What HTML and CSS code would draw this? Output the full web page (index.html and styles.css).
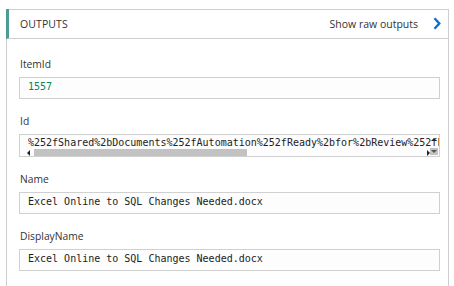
FILE: index.html
```html
<!DOCTYPE html>
<html>
<head>
<meta charset="utf-8">
<link rel="stylesheet" href="styles.css">
</head>
<body>
<div class="panel">
  <div class="header">
    <span class="title">OUTPUTS</span>
    <span class="raw">Show raw outputs
      <svg class="chev" width="8" height="13" viewBox="0 0 8 13"><path d="M1.5 1.2 L6.3 6.5 L1.5 11.8" fill="none" stroke="#0b6fd6" stroke-width="2.4"/></svg>
    </span>
  </div>
  <div class="body">
    <div class="field">
      <div class="label">ItemId</div>
      <div class="box"><span class="num">1557</span></div>
    </div>
    <div class="field">
      <div class="label">Id</div>
      <div class="box scroll">
        <div class="line">%252fShared%2bDocuments%252fAutomation%252fReady%2bfor%2bReview%252fExcel</div>
        <div class="hbar">
          <span class="arr left"></span>
          <span class="thumb"></span>
          <span class="arr right"></span>
        </div>
        <div class="vbar">
          <span class="up"></span>
          <span class="down"><span class="dtri"></span></span>
        </div>
      </div>
    </div>
    <div class="field">
      <div class="label">Name</div>
      <div class="box">Excel Online to SQL Changes Needed.docx</div>
    </div>
    <div class="field">
      <div class="label">DisplayName</div>
      <div class="box">Excel Online to SQL Changes Needed.docx</div>
    </div>
  </div>
</div>
</body>
</html>
```
FILE: styles.css
```css
html, body {
  margin: 0;
  padding: 0;
  background: #fff;
  overflow: hidden;
  height: 286px;
}
body {
  font-family: "Open Sans", "Noto Sans", sans-serif;
  color: #333;
}
.panel {
  margin: 9px 0 0 6px;
  width: 443px;
  height: 277px;
  border: 1px solid #cfcfcf;
  border-bottom: none;
  box-sizing: border-box;
}
.header {
  box-sizing: border-box;
  border-bottom: 1px solid #cfcfcf;
  border-left: 3px solid #4e9b96;
  margin-left: -1px;
  margin-top: -1px;
  height: 30px;
  display: flex;
  align-items: center;
  justify-content: space-between;
  padding: 0 7px 0 11px;
  font-size: 10.5px;
}
.title {
  letter-spacing: 0.1px;
  color: #333;
}
.raw {
  display: flex;
  align-items: center;
  gap: 15px;
  color: #333;
}
.chev { display: block; }
.body {
  padding: 18px 10px 0 12px;
  display: flex;
  flex-direction: column;
  gap: 15px;
}
.field {
  display: flex;
  flex-direction: column;
  gap: 6px;
}
.label {
  height: 14px;
  line-height: 14px;
  font-size: 10.3px;
  padding-left: 1px;
  color: #333;
}
.box {
  height: 22px;
  box-sizing: border-box;
  width: 421px;
  border: 1px solid #d0d0d0;
  background: #fdfdfd;
  font-family: "DejaVu Sans Mono", "Liberation Mono", monospace;
  font-size: 10px;
  line-height: 12px;
  padding: 3px 0 0 8px;
  color: #222;
  white-space: nowrap;
  overflow: hidden;
}
.num { color: #098658; }
.scroll {
  position: relative;
  padding: 2px 0 0 8px;
  height: 23px;
}
.line {
  height: 11px;
  line-height: 11px;
  overflow: hidden;
}
.hbar {
  display: flex;
  align-items: center;
  height: 7px;
  margin-top: 1px;
  margin-left: -1px;
  width: 403px;
}
.arr {
  width: 0;
  height: 0;
  border-top: 3px solid transparent;
  border-bottom: 3px solid transparent;
}
.arr.left {
  border-right: 3px solid #222;
  margin-right: 4px;
}
.arr.right {
  border-left: 3px solid #222;
  margin-left: auto;
}
.thumb {
  width: 213px;
  height: 7px;
  background: #c2c2c2;
}
.vbar {
  position: absolute;
  right: 1px;
  top: 1px;
  bottom: 1px;
  width: 8px;
  display: flex;
  flex-direction: column;
  justify-content: space-between;
  align-items: center;
}
.up {
  width: 0;
  height: 0;
  margin-top: 2px;
  border-left: 3px solid transparent;
  border-right: 3px solid transparent;
  border-bottom: 3px solid #222;
}
.down {
  width: 8px;
  height: 7px;
  background: #c2c2c2;
  display: flex;
  align-items: center;
  justify-content: center;
}
.dtri {
  width: 0;
  height: 0;
  border-left: 3px solid transparent;
  border-right: 3px solid transparent;
  border-top: 3px solid #555;
}
```
